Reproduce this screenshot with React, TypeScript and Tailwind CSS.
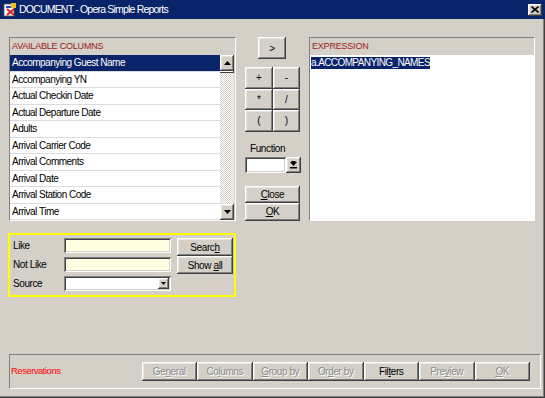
import React from "react";

const raised =
  "shadow-[inset_-1px_-1px_#404040,inset_1px_1px_#ffffff,inset_-2px_-2px_#808080,inset_2px_2px_#e8e6e0]";
const sunken =
  "shadow-[inset_1px_1px_#808080,inset_-1px_-1px_#ffffff,inset_2px_2px_#404040,inset_-2px_-2px_#d4d0c8]";

function Btn({
  children,
  className = "",
  disabled = false,
}: {
  children: React.ReactNode;
  className?: string;
  disabled?: boolean;
}) {
  return (
    <div
      className={`flex items-center justify-center bg-[#d4d0c8] text-[10px] tracking-[-0.4px] ${raised} ${
        disabled ? "text-[#8a8a8a] [text-shadow:1px_1px_0_#ffffff]" : "text-black"
      } ${className}`}
    >
      <span className="whitespace-pre">{children}</span>
    </div>
  );
}

const U = ({ children }: { children: React.ReactNode }) => <span className="underline underline-offset-1">{children}</span>;

function Arrow({ dir }: { dir: "up" | "down" }) {
  return (
    <svg width="7" height="4" viewBox="0 0 7 4">
      {dir === "up" ? <polygon points="3.5,0 7,4 0,4" fill="#000" /> : <polygon points="0,0 7,0 3.5,4" fill="#000" />}
    </svg>
  );
}

const rows = [
  "Accompanying Guest Name",
  "Accompanying YN",
  "Actual Checkin Date",
  "Actual Departure Date",
  "Adults",
  "Arrival Carrier Code",
  "Arrival Comments",
  "Arrival Date",
  "Arrival Station Code",
  "Arrival Time",
];

export default function App() {
  return (
    <div
      className="w-[545px] h-[398px] bg-[#d4d0c8] flex flex-col relative shadow-[inset_-1px_-1px_#404040,inset_-2px_-2px_#808080] overflow-hidden"
      style={{ fontFamily: '"Liberation Sans", Arial, sans-serif' }}
    >
      {/* Title bar */}
      <div className="h-[19px] bg-[#0a246a] flex items-center pl-[3px] pr-[3px] shrink-0">
        <svg width="14" height="14" viewBox="0 0 14 14" className="mr-[2px]">
          <rect x="1" y="1" width="10" height="12" fill="#fff" stroke="#555" strokeWidth="0.8" />
          <rect x="3" y="3" width="8" height="2" fill="#1f4fd0" />
          <path d="M4 6 L11 12 M11 6 L4 12" stroke="#e02020" strokeWidth="2" />
          <rect x="8" y="0" width="5" height="5" fill="#f0c020" />
        </svg>
        <span className="text-white text-[10.5px] tracking-[-0.8px] leading-none">DOCUMENT - Opera Simple Reports</span>
        <div className={`ml-auto w-[14px] h-[12px] bg-[#d4d0c8] flex items-center justify-center ${raised}`}>
          <svg width="8" height="7" viewBox="0 0 8 7">
            <path d="M0.5 0.5 L7.5 6.5 M7.5 0.5 L0.5 6.5" stroke="#000" strokeWidth="1.6" />
          </svg>
        </div>
      </div>

      {/* Top section */}
      <div className="flex pt-[18px] pl-[9px]">
        {/* Left column */}
        <div className="flex flex-col w-[227px]">
          <div className="h-[184px] border border-t-[#808080] border-l-[#808080] border-b-white border-r-white flex flex-col">
            <div className="h-[17px] flex items-center pl-[2px] text-[9px] tracking-[-0.2px] text-[#9b1b1b]">
              AVAILABLE COLUMNS
            </div>
            <div className="flex flex-1">
              <div className="w-[210px] bg-white flex flex-col">
                {rows.map((r, i) => (
                  <div
                    key={r}
                    className={`h-[16.5px] flex items-center pl-[2px] text-[10px] tracking-[-0.5px] border-b border-[#dcdcdc] ${
                      i === 0 ? "bg-[#0a246a] text-white border-[#0a246a]" : "text-black"
                    }`}
                  >
                    {r}
                  </div>
                ))}
              </div>
              <div className="w-[14px] flex flex-col bg-[repeating-conic-gradient(#d4d0c8_0_25%,#ffffff_0_50%)] bg-[length:2px_2px]">
                <div className={`h-[16px] bg-[#d4d0c8] flex items-center justify-center ${raised}`}>
                  <Arrow dir="up" />
                </div>
                <div className={`h-[2px] bg-[#d4d0c8] ${raised}`} />
                <div className="flex-1" />
                <div className={`h-[16px] bg-[#d4d0c8] flex items-center justify-center ${raised}`}>
                  <Arrow dir="down" />
                </div>
              </div>
            </div>
          </div>

          {/* Search box */}
          <div className="mt-[12px] -ml-[1px] w-[228px] h-[64px] border-2 border-[#ffff00] flex pl-[3px] pt-[3px] pr-[1px]">
            <div className="flex flex-col gap-[5px] text-[10px] tracking-[-0.4px] text-black">
              {["Like", "Not Like", "Source"].map((l, i) => (
                <div key={l} className="flex items-center h-[14px]">
                  <span className="w-[51px]">{l}</span>
                  <div
                    className={`w-[107px] h-[15px] ${i === 2 ? "bg-white" : "bg-[#ffffe1]"} ${sunken} flex justify-end items-center pr-[2px]`}
                  >
                    {i === 2 && (
                      <div className={`w-[11px] h-[11px] bg-[#d4d0c8] flex items-center justify-center ${raised}`}>
                        <svg width="5" height="3" viewBox="0 0 5 3">
                          <polygon points="0,0 5,0 2.5,3" fill="#000" />
                        </svg>
                      </div>
                    )}
                  </div>
                </div>
              ))}
            </div>
            <div className="ml-[6px] flex flex-col">
              <Btn className="w-[56px] h-[18px]">
                Searc<U>h</U>
              </Btn>
              <Btn className="w-[56px] h-[18px]">
                {"Show "}<U>a</U>ll
              </Btn>
            </div>
          </div>
        </div>

        {/* Middle column */}
        <div className="ml-[9px] w-[56px] flex flex-col">
          <Btn className="ml-[13px] w-[28px] h-[22px]">&gt;</Btn>
          <div className="mt-[8px] grid grid-cols-2 w-[55px]">
            {["+", "-", "*", "/", "(", ")"].map((s) => (
              <Btn key={s} className="h-[21.5px]">
                {s}
              </Btn>
            ))}
          </div>
          <div className="mt-[12px] text-[10px] tracking-[-0.4px] text-black leading-none pl-[5px]">Function</div>
          <div className="mt-[3px] flex">
            <div className={`w-[41px] h-[16px] bg-white ${sunken}`} />
            <Btn className="w-[15px] h-[16px]">
              <svg width="7" height="8" viewBox="0 0 7 8">
                <polygon points="0,1 7,1 3.5,5" fill="#000" />
                <rect x="0" y="6" width="7" height="1.5" fill="#000" />
                <rect x="1.5" y="0" width="4" height="1.5" fill="#000" />
              </svg>
            </Btn>
          </div>
          <Btn className="mt-[13px] w-[55px] h-[17px]">
            <U>C</U>lose
          </Btn>
          <Btn className="w-[55px] h-[18px]">
            <U>O</U>K
          </Btn>
        </div>

        {/* Expression panel */}
        <div className="ml-[8px] w-[226px] h-[184px] border border-t-[#808080] border-l-[#808080] border-b-white border-r-white flex flex-col">
          <div className="h-[17px] flex items-center pl-[2px] text-[9px] tracking-[-0.2px] text-[#9b1b1b]">EXPRESSION</div>
          <div className="flex-1 bg-white pt-[2px] pl-[1px] flex items-start">
            <span className="bg-[#0a246a] text-white text-[10px] tracking-[-0.6px] leading-[12px] block">
              a.ACCOMPANYING_NAMES
            </span>
          </div>
        </div>
      </div>

      {/* Bottom bar */}
      <div className="mt-auto mb-[9px] ml-[9px] w-[532px] h-[35px] border border-t-[#808080] border-l-[#808080] border-b-white border-r-white flex items-center">
        <span className="pl-[1px] text-[9.5px] tracking-[-0.5px] text-[#ff0000] w-[130px]">Reservations</span>
        <div className="ml-auto mr-[10px] flex">
          <Btn disabled className="w-[55.5px] h-[19px]">
            Ge<U>n</U>eral
          </Btn>
          <Btn disabled className="w-[55.5px] h-[19px]">
            Co<U>l</U>umns
          </Btn>
          <Btn disabled className="w-[55.5px] h-[19px]">
            <U>G</U>roup by
          </Btn>
          <Btn disabled className="w-[55.5px] h-[19px]">
            Or<U>d</U>er by
          </Btn>
          <Btn className="w-[55.5px] h-[19px]">
            Fil<U>t</U>ers
          </Btn>
          <Btn disabled className="w-[55.5px] h-[19px]">
            Pre<U>v</U>iew
          </Btn>
          <Btn disabled className="w-[55.5px] h-[19px]">
            <U>O</U>K
          </Btn>
        </div>
      </div>
    </div>
  );
}
